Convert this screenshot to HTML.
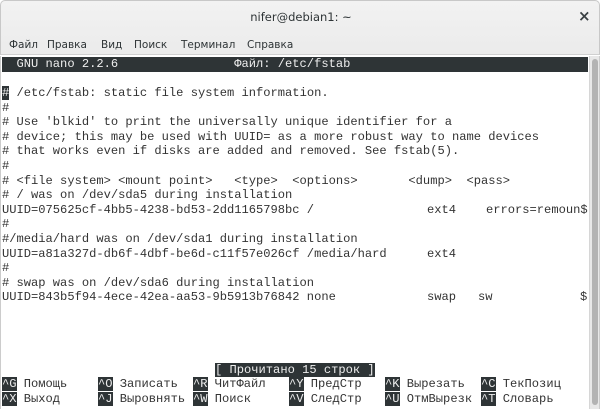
<!DOCTYPE html>
<html><head><meta charset="utf-8"><style>
*{margin:0;padding:0;box-sizing:border-box}
body{width:600px;height:409px;overflow:hidden;background:#fff;position:relative;font-family:"Liberation Sans","DejaVu Sans",sans-serif}
.chrome{position:absolute;left:0;top:0;width:600px;height:55px;background:linear-gradient(#f2f2f2,#ebebeb);border:1px solid #c8c8c8;border-bottom:1px solid #d0d0d0;border-radius:5px 5px 0 0}
.title{position:absolute;top:9px;left:0;width:600px;text-align:center;font-family:"DejaVu Sans",sans-serif;font-size:11.5px;color:#2e3436}
.x{position:absolute;left:577px;top:6px;font-size:15px;font-weight:bold;color:#3a4043;font-family:"DejaVu Sans",sans-serif}
.menu{position:absolute;top:38px;left:0;width:600px;height:16px;font-family:"DejaVu Sans",sans-serif;font-size:10.5px;color:#2e3436}
.menu span{position:absolute;top:0}
.term{position:absolute;left:0;top:56px;width:600px;height:353px;background:#fff;border-left:1px solid #ccc;border-right:1px solid #ccc}
.sb{position:absolute;left:589px;top:56px;width:10px;height:353px;background:#e8e8e8;border-left:1px solid #d6d6d6}
.sb div{position:absolute;left:2px;top:3px;width:6px;height:346px;background:#b3b3b3;border-radius:3px}
.l{position:absolute;left:2px;font-family:"Liberation Mono",monospace;font-size:12.1px;line-height:14.6px;height:14.6px;color:#333;white-space:pre}
.t{position:absolute;font-family:"Liberation Mono",monospace;font-size:12.1px;line-height:14.6px;color:#333;white-space:pre}
.l.inv,.t.inv,.inv{background:#2e3436;color:#eee}
</style></head><body>
<div class="chrome"><div class="title">nifer@debian1: ~</div><div class="x">×</div>
<div class="menu"><span style="left:8px">Файл</span><span style="left:46px">Правка</span><span style="left:100px">Вид</span><span style="left:133px">Поиск</span><span style="left:180px">Терминал</span><span style="left:246px">Справка</span></div></div>
<div class="term"></div>
<div class="sb"><div></div></div>
<div class="l inv" style="top:57px;width:586px">  GNU nano 2.2.6                Файл: /etc/fstab</div>
<div class="l" style="top:86px"><span class="inv">#</span> /etc/fstab: static file system information.</div>
<div class="l" style="top:100.6px">#</div>
<div class="l" style="top:115.2px"># Use 'blkid' to print the universally unique identifier for a</div>
<div class="l" style="top:129.8px"># device; this may be used with UUID= as a more robust way to name devices</div>
<div class="l" style="top:144.4px"># that works even if disks are added and removed. See fstab(5).</div>
<div class="l" style="top:159px">#</div>
<div class="l" style="top:173.6px"># &lt;file system&gt; &lt;mount point&gt;   &lt;type&gt;  &lt;options&gt;       &lt;dump&gt;  &lt;pass&gt;</div>
<div class="l" style="top:188.2px"># / was on /dev/sda5 during installation</div>
<div class="l" style="top:202.8px">UUID=075625cf-4bb5-4238-bd53-2dd1165798bc /</div>
<div class="t" style="top:202.8px;left:427px">ext4</div><div class="t" style="top:202.8px;left:486px">errors=remoun$</div>
<div class="l" style="top:217.4px">#</div>
<div class="l" style="top:232px">#/media/hard was on /dev/sda1 during installation</div>
<div class="l" style="top:246.6px">UUID=a81a327d-db6f-4dbf-be6d-c11f57e026cf /media/hard</div>
<div class="t" style="top:246.6px;left:427px">ext4</div>
<div class="l" style="top:261.2px">#</div>
<div class="l" style="top:275.8px"># swap was on /dev/sda6 during installation</div>
<div class="l" style="top:290.4px">UUID=843b5f94-4ece-42ea-aa53-9b5913b76842 none</div>
<div class="t" style="top:290.4px;left:427px">swap</div><div class="t" style="top:290.4px;left:478px">sw</div><div class="t" style="top:290.4px;left:580px">$</div>
<div class="t inv" style="top:362.6px;left:215px">[ Прочитано 15 строк ]</div>
<div class="t" style="top:377.2px;left:2px"><span class="inv">^G</span> Помощь</div>
<div class="t" style="top:391.8px;left:2px"><span class="inv">^X</span> Выход</div>
<div class="t" style="top:377.2px;left:98px"><span class="inv">^O</span> Записать</div>
<div class="t" style="top:391.8px;left:98px"><span class="inv">^J</span> Выровнять</div>
<div class="t" style="top:377.2px;left:193px"><span class="inv">^R</span> ЧитФайл</div>
<div class="t" style="top:391.8px;left:193px"><span class="inv">^W</span> Поиск</div>
<div class="t" style="top:377.2px;left:289px"><span class="inv">^Y</span> ПредСтр</div>
<div class="t" style="top:391.8px;left:289px"><span class="inv">^V</span> СледСтр</div>
<div class="t" style="top:377.2px;left:385px"><span class="inv">^K</span> Вырезать</div>
<div class="t" style="top:391.8px;left:385px"><span class="inv">^U</span> ОтмВырезк</div>
<div class="t" style="top:377.2px;left:481px"><span class="inv">^C</span> ТекПозиц</div>
<div class="t" style="top:391.8px;left:481px"><span class="inv">^T</span> Словарь</div>
</body></html>
